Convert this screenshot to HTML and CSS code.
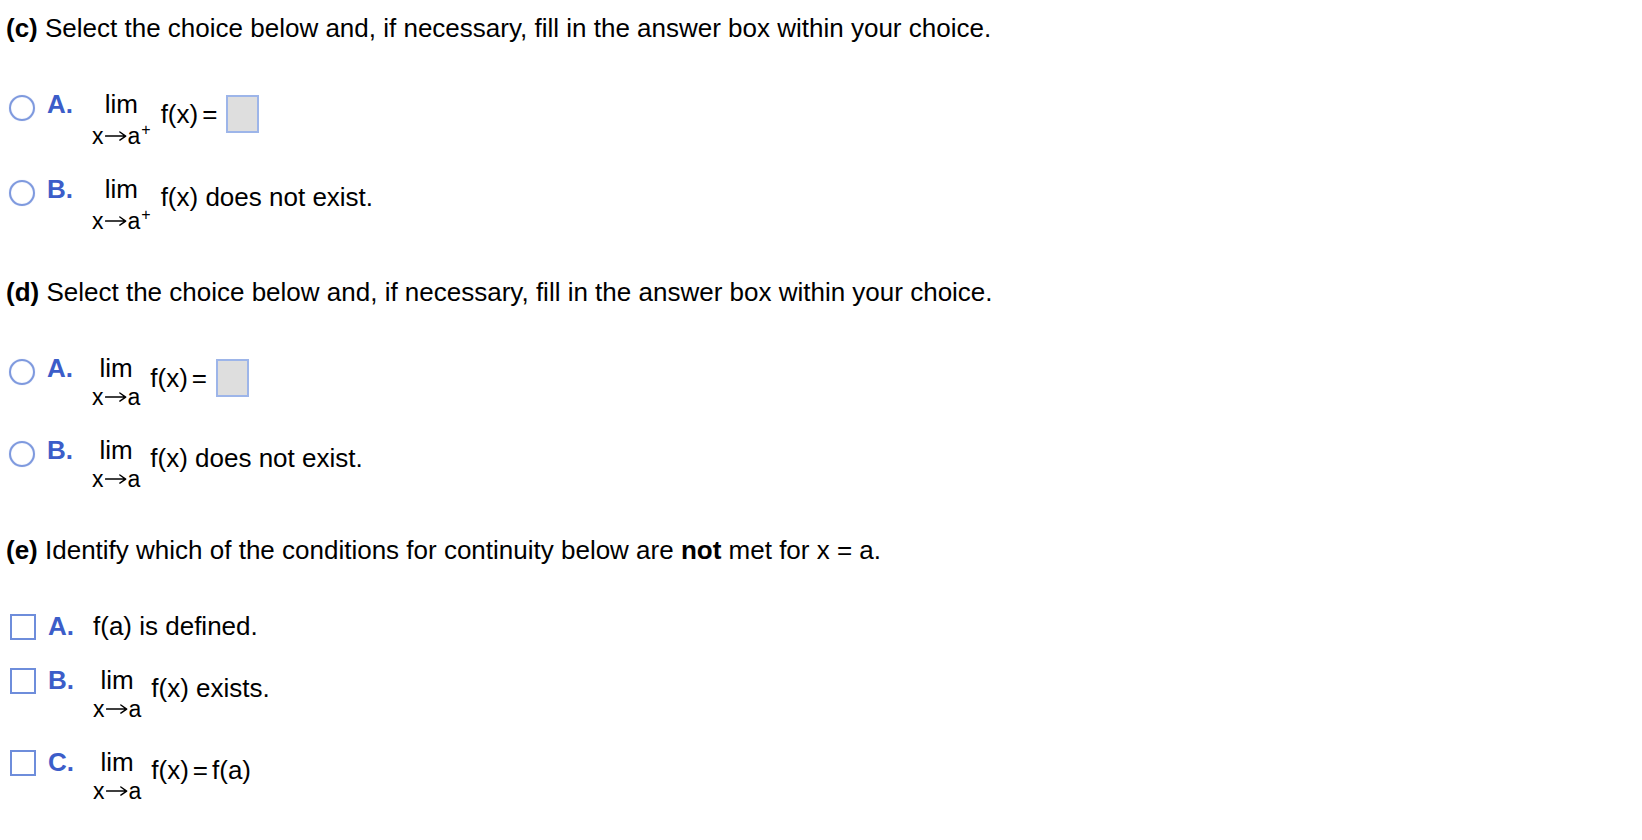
FILE: index.html
```html
<!DOCTYPE html>
<html>
<head>
<meta charset="utf-8">
<link rel="stylesheet" href="styles.css">
</head>
<body>
<div class="page">
  <section class="part">
    <p class="q"><b>(c)</b> Select the choice below and, if necessary, fill in the answer box within your choice.</p>
    <div class="choices">
      <div class="choice">
        <span class="radio"></span><span class="letter">A.</span>
        <span class="math">
          <span class="limit"><span class="lim">lim</span><span class="under plus">x<svg class="arrow" viewBox="0 0 20 10" aria-label="→"><path d="M0.5 5.5H18.5M13.5 1.8L18.8 5.5L13.5 9.2"/></svg>a<sup>+</sup></span></span>
          <span class="expr box-expr">f(x)<span class="eq">=</span><span class="answer"></span></span>
        </span>
      </div>
      <div class="choice">
        <span class="radio"></span><span class="letter">B.</span>
        <span class="math">
          <span class="limit"><span class="lim">lim</span><span class="under plus">x<svg class="arrow" viewBox="0 0 20 10" aria-label="→"><path d="M0.5 5.5H18.5M13.5 1.8L18.8 5.5L13.5 9.2"/></svg>a<sup>+</sup></span></span>
          <span class="expr">f(x) does not exist.</span>
        </span>
      </div>
    </div>
  </section>

  <section class="part">
    <p class="q"><b>(d)</b> Select the choice below and, if necessary, fill in the answer box within your choice.</p>
    <div class="choices">
      <div class="choice">
        <span class="radio"></span><span class="letter">A.</span>
        <span class="math">
          <span class="limit"><span class="lim">lim</span><span class="under">x<svg class="arrow" viewBox="0 0 20 10" aria-label="→"><path d="M0.5 5.5H18.5M13.5 1.8L18.8 5.5L13.5 9.2"/></svg>a</span></span>
          <span class="expr box-expr">f(x)<span class="eq">=</span><span class="answer"></span></span>
        </span>
      </div>
      <div class="choice">
        <span class="radio"></span><span class="letter">B.</span>
        <span class="math">
          <span class="limit"><span class="lim">lim</span><span class="under">x<svg class="arrow" viewBox="0 0 20 10" aria-label="→"><path d="M0.5 5.5H18.5M13.5 1.8L18.8 5.5L13.5 9.2"/></svg>a</span></span>
          <span class="expr">f(x) does not exist.</span>
        </span>
      </div>
    </div>
  </section>

  <section class="part">
    <p class="q"><b>(e)</b> Identify which of the conditions for continuity below are <b>not</b> met for x = a.</p>
    <div class="choices">
      <div class="choice">
        <span class="check"></span><span class="letter">A.</span>
        <span class="math"><span class="plain">f(a) is defined.</span></span>
      </div>
      <div class="choice">
        <span class="check"></span><span class="letter">B.</span>
        <span class="math">
          <span class="limit"><span class="lim">lim</span><span class="under">x<svg class="arrow" viewBox="0 0 20 10" aria-label="→"><path d="M0.5 5.5H18.5M13.5 1.8L18.8 5.5L13.5 9.2"/></svg>a</span></span>
          <span class="expr">f(x) exists.</span>
        </span>
      </div>
      <div class="choice">
        <span class="check"></span><span class="letter">C.</span>
        <span class="math">
          <span class="limit"><span class="lim">lim</span><span class="under">x<svg class="arrow" viewBox="0 0 20 10" aria-label="→"><path d="M0.5 5.5H18.5M13.5 1.8L18.8 5.5L13.5 9.2"/></svg>a</span></span>
          <span class="expr">f(x)<span class="eq">=</span>f(a)</span>
        </span>
      </div>
    </div>
  </section>
</div>
</body>
</html>
```
FILE: styles.css
```css
html, body {
  margin: 0;
  padding: 0;
  background: #ffffff;
}
body {
  font-family: "Liberation Sans", Arial, sans-serif;
  font-size: 26px;
  line-height: 30px;
  color: #000;
}
.page {
  padding: 13px 0 0 6px;
  display: flex;
  flex-direction: column;
  gap: 42px;
}
.part {
  display: flex;
  flex-direction: column;
}
.q {
  margin: 0 0 46px 0;
  white-space: nowrap;
}
.choices {
  display: flex;
  flex-direction: column;
  gap: 24px;
}
.choice {
  display: flex;
  align-items: flex-start;
}
.radio {
  width: 22px;
  height: 22px;
  border-radius: 50%;
  border: 2px solid #7e99de;
  box-shadow: inset 0 0 1px #b9c8ee, 0 0 1px #b9c8ee;
  margin: 6px 0 0 3px;
  flex: none;
}
.check {
  width: 22px;
  height: 22px;
  border: 2px solid #6e8ddb;
  margin: 3px 0 0 4px;
  flex: none;
}
.letter {
  color: #3c5dc9;
  font-weight: bold;
  margin-left: 12px;
  width: 45px;
  flex: none;
}
.math {
  display: flex;
  align-items: flex-start;
  gap: 10px;
}
.limit {
  display: flex;
  flex-direction: column;
  align-items: center;
}
.lim {
  line-height: 30px;
}
.under {
  font-size: 23px;
  line-height: 28px;
  white-space: nowrap;
}
.arrow {
  width: 22px;
  height: 11px;
  margin: 0 1px 0 1px;
  vertical-align: 3px;
  fill: none;
  stroke: #000;
  stroke-width: 1.3;
  stroke-linecap: round;
  stroke-linejoin: round;
}
.under.plus {
  padding-top: 3px;
}
.under sup {
  font-size: 16px;
  line-height: 0;
  vertical-align: 9px;
  margin-left: 1px;
}
.expr {
  display: flex;
  align-items: flex-start;
  margin-top: 8px;
  white-space: pre;
}
.box-expr {
  margin-top: 10px;
}
.eq {
  margin: 0 4px;
}
.answer {
  width: 29px;
  height: 34px;
  border: 2px solid #9db5e9;
  background: #dedede;
  margin: -4px 0 0 5px;
}
.plain {
  white-space: pre;
}
```
